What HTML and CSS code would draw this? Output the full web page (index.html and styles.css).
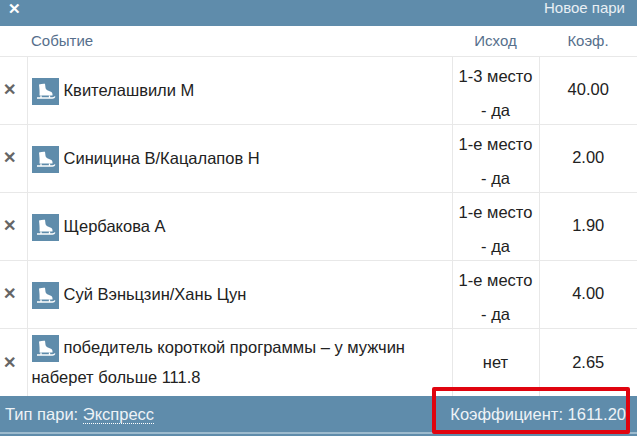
FILE: index.html
```html
<!DOCTYPE html>
<html lang="en">
<head>
  <meta charset="UTF-8" />
  <title>Новое пари</title>
  <link rel="stylesheet" href="styles.css">
</head>
<body>
  <svg class="sprite" width="0" height="0">
    <symbol id="skate" viewBox="0 0 27 27">
      <path fill="#fff" d="M7 6.500c2-.8 4.500-1 6-.8l.5 4c.2 1.500 1.200 2.300 3 3 2.500.9 4 1.500 4 3.500v1.300H7.500c.3-3.500-.1-7.500-.5-11z"/>
      <path fill="none" stroke="#fff" stroke-width="1.300" d="M5 20h15.500c1.100 0 1.900-.5 2.400-1.500M9 17.500V20M17.500 17.500V20"/>
    </symbol>
  </svg>

  <div class="top-bar">
    <span class="close-btn">✕</span>
    <span class="top-title">Новое пари</span>
  </div>

  <table class="bets">
    <thead>
      <tr>
        <th class="col-del"></th>
        <th class="col-event">Событие</th>
        <th class="col-outcome">Исход</th>
        <th class="col-odds">Коэф.</th>
      </tr>
    </thead>
    <tbody>
      <tr>
        <td class="col-del"><span class="del">✕</span></td>
        <td class="col-event"><svg class="sport-icon"><use href="#skate"/></svg>Квителашвили М</td>
        <td class="col-outcome"><div class="outcome-lines">1-3 место - да</div></td>
        <td class="col-odds">40.00</td>
      </tr>
      <tr>
        <td class="col-del"><span class="del">✕</span></td>
        <td class="col-event"><svg class="sport-icon"><use href="#skate"/></svg>Синицина В/Кацалапов Н</td>
        <td class="col-outcome"><div class="outcome-lines">1-е место - да</div></td>
        <td class="col-odds">2.00</td>
      </tr>
      <tr>
        <td class="col-del"><span class="del">✕</span></td>
        <td class="col-event"><svg class="sport-icon"><use href="#skate"/></svg>Щербакова А</td>
        <td class="col-outcome"><div class="outcome-lines">1-е место - да</div></td>
        <td class="col-odds">1.90</td>
      </tr>
      <tr>
        <td class="col-del"><span class="del">✕</span></td>
        <td class="col-event"><svg class="sport-icon"><use href="#skate"/></svg>Суй Вэньцзин/Хань Цун</td>
        <td class="col-outcome"><div class="outcome-lines">1-е место - да</div></td>
        <td class="col-odds">4.00</td>
      </tr>
      <tr>
        <td class="col-del"><span class="del">✕</span></td>
        <td class="col-event"><svg class="sport-icon"><use href="#skate"/></svg>победитель короткой программы – у мужчин наберет больше 111.8</td>
        <td class="col-outcome">нет</td>
        <td class="col-odds">2.65</td>
      </tr>
    </tbody>
  </table>

  <div class="bottom-bar">
    <span>Тип пари: <span class="bet-type">Экспресс</span></span>
    <span class="total">Коэффициент: 1611.20</span>
  </div>

  <div class="highlight"></div>
</body>
</html>
```

FILE: styles.css
```css
html, body {
  height: 100%;
}
body {
  margin: 0;
  position: relative;
  overflow: hidden;
  background: #fff;
  font-family: "Liberation Sans", Arial, sans-serif;
  font-size: 16.5px;
  color: #222;
}
.sprite {
  position: absolute;
}
.top-bar {
  height: 26px;
  box-sizing: border-box;
  padding: 0 12px 0 8px;
  display: flex;
  justify-content: space-between;
  background: #5f8cab;
  color: #e9eff4;
  font-size: 15px;
  line-height: 16px;
}
.close-btn {
  color: #fff;
  font-size: 15px;
  line-height: 17px;
  font-weight: bold;
}
.bets {
  width: 100%;
  table-layout: fixed;
  border-collapse: collapse;
}
.bets th {
  height: 30px;
  padding: 0;
  box-sizing: border-box;
  font-size: 15px;
  font-weight: normal;
  color: #566f8c;
  border-bottom: 1px solid #e8e8e8;
}
.bets td {
  height: 68px;
  padding: 0 4px;
  box-sizing: border-box;
  line-height: 33.5px;
  text-align: center;
  border-bottom: 1px solid #e8e8e8;
  border-left: 1px solid #e8e8e8;
}
.bets tr:last-child td {
  border-bottom: 0;
}
.bets td:first-child {
  border-left: 0;
  padding: 0 7px 0 0;
}
.col-del {
  width: 27px;
}
.bets .col-event {
  text-align: left;
}
.bets td.col-event {
  line-height: 30px;
}
.bets th.col-event {
  padding-left: 4px;
}
.col-outcome {
  width: 87px;
}
.outcome-lines {
  line-height: 34px;
  margin: 2px 0 -3px;
}
.col-odds {
  width: 98px;
}
.del {
  color: #666;
  font-size: 16px;
  font-weight: bold;
}
.sport-icon {
  width: 27px;
  height: 27px;
  margin-right: 5px;
  background: #5f8cab;
  vertical-align: middle;
}
.bottom-bar {
  height: 38px;
  box-sizing: border-box;
  padding: 0 11px 0 5px;
  display: flex;
  justify-content: space-between;
  align-items: center;
  background: #5f8cab;
  color: #eef3f7;
  border-bottom: 2px solid #9dbbce;
  box-shadow: 0 2px 0 #5f8cab;
}
.bet-type {
  border-bottom: 1px dotted #fff;
}
.highlight {
  position: absolute;
  left: 432px;
  top: 387px;
  width: 198px;
  height: 47px;
  box-sizing: border-box;
  border: 4px solid #e0040f;
  border-radius: 2px;
}
```
